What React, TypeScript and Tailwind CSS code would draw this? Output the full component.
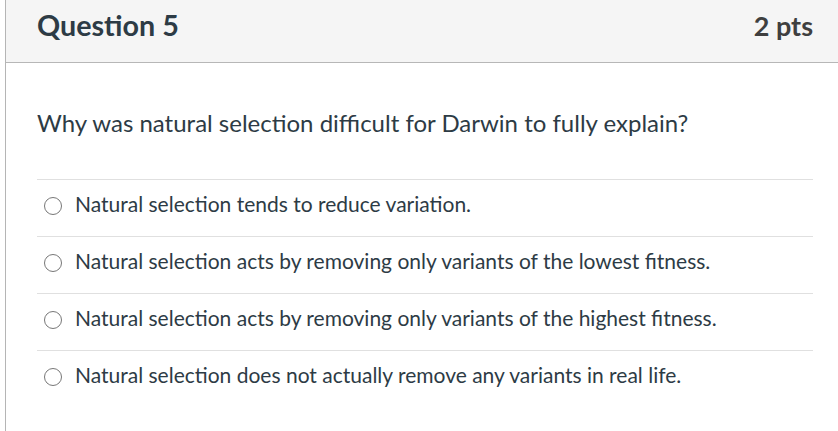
const answers = [
  "Natural selection tends to reduce variation.",
  "Natural selection acts by removing only variants of the lowest fitness.",
  "Natural selection acts by removing only variants of the highest fitness.",
  "Natural selection does not actually remove any variants in real life.",
];

export default function App() {
  return (
    <div className="w-[838px] h-[431px] bg-white pl-[5px] font-['Lato',sans-serif] text-[#2d3b45] overflow-hidden">
      <div className="h-full border-l border-[#b5b5b5]">
        {/* Header */}
        <div className="h-[63px] bg-[#f5f5f5] border-b border-[#b7b7b7] flex items-center justify-between pl-[31px] pr-[25px] pb-[12px]">
          <h2 className="text-[28.7px] font-bold leading-none">Question 5</h2>
          <span className="text-[27px] font-bold leading-none text-[#3f3f3f]">2 pts</span>
        </div>

        <div className="pl-[31px] pr-[25px]">
          <p className="text-[24px] leading-none pt-[48px] pb-[44px]">
            Why was natural selection difficult for Darwin to fully explain?
          </p>

          <div>
            {answers.map((a, i) => (
              <label key={i} className="flex items-center h-[57px] border-t border-[#e0e0e0] pl-[7px] pb-[9px]">
                <span className="mt-[4px] w-[18px] h-[18px] rounded-full border-[1.5px] border-[#777] shrink-0" />
                <span className="ml-[13px] text-[21px] leading-none">{a}</span>
              </label>
            ))}
          </div>
        </div>
      </div>
    </div>
  );
}
